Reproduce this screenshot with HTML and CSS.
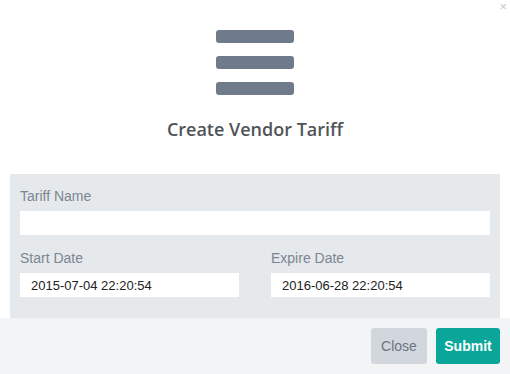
FILE: index.html
```html
<!DOCTYPE html>
<html lang="en">
<head>
  <meta charset="UTF-8" />
  <title>Create Vendor Tariff</title>
  <link rel="stylesheet" href="styles.css">
</head>
<body>
  <div class="modal">
    <span class="close-x">&times;</span>
    <div class="modal-header">
      <div class="menu-icon">
        <span></span>
        <span></span>
        <span></span>
      </div>
      <h4>Create Vendor Tariff</h4>
    </div>

    <div class="modal-body">
      <label for="tariff-name">Tariff Name</label>
      <input type="text" id="tariff-name" class="full" />

      <div class="date-row">
        <div>
          <label for="start-date">Start Date</label>
          <input type="text" id="start-date" value="2015-07-04 22:20:54" />
        </div>
        <div>
          <label for="expire-date">Expire Date</label>
          <input type="text" id="expire-date" value="2016-06-28 22:20:54" />
        </div>
      </div>
    </div>

    <div class="modal-footer">
      <button type="button" class="btn-close">Close</button>
      <button type="submit" class="btn-submit">Submit</button>
    </div>
  </div>
</body>
</html>
```

FILE: styles.css
```css
* {
  box-sizing: border-box;
}

body {
  margin: 0;
  font-family: "Liberation Sans", Arial, sans-serif;
  background-color: white;
}

.modal {
  position: relative;
  width: 510px;
  height: 374px;
  background-color: white;
  display: flex;
  flex-direction: column;
}

.close-x {
  position: absolute;
  top: -1px;
  right: 3px;
  font-size: 13px;
  color: #c8c8c8;
}

.modal-header {
  padding-top: 30px;
  text-align: center;
}

.menu-icon {
  display: flex;
  flex-direction: column;
  align-items: center;
  gap: 13px;
}

.menu-icon span {
  display: block;
  width: 78px;
  height: 13px;
  border-radius: 3px;
  background-color: #6f7b8a;
}

h4 {
  margin: 21px 0 0;
  font-family: "Open Sans", sans-serif;
  font-weight: 600;
  font-size: 18px;
  line-height: 26px;
  color: #505458;
}

.modal-body {
  margin: 32px 10px 0;
  background-color: #e5e9ec;
  padding: 12px 10px 21px;
}

label {
  display: block;
  font-size: 14px;
  line-height: 20px;
  color: #7b8691;
  margin-bottom: 5px;
}

input[type="text"] {
  display: block;
  width: 100%;
  height: 24px;
  border: none;
  padding: 0 11px;
  font-family: "Liberation Sans", Arial, sans-serif;
  font-size: 13px;
  color: #222;
  background-color: white;
  outline: none;
}

.date-row {
  display: grid;
  grid-template-columns: 1fr 1fr;
  gap: 32px;
  margin-top: 13px;
}

.modal-footer {
  flex: 1;
  background-color: #f3f4f6;
  display: flex;
  justify-content: flex-end;
  align-items: flex-start;
  gap: 9px;
  padding: 10px 10px 0;
}

.modal-footer button {
  height: 36px;
  border: none;
  border-radius: 3px;
  font-family: "Liberation Sans", Arial, sans-serif;
  font-size: 14px;
  cursor: pointer;
}

.btn-close {
  width: 56px;
  background-color: #d1d7dc;
  color: #6b7580;
}

.btn-submit {
  width: 64px;
  background-color: #0aa699;
  color: white;
  font-weight: bold;
}
```
